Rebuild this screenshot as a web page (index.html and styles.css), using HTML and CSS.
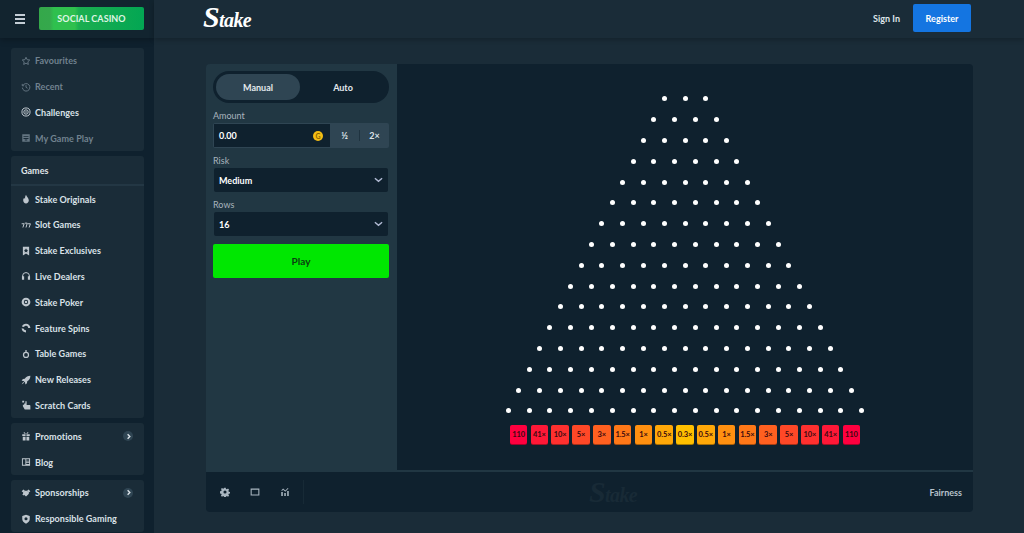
FILE: index.html
```html
<!DOCTYPE html>
<html lang="en">
<head>
    <meta charset="UTF-8">
    <meta name="viewport" content="width=device-width, initial-scale=1.0">
    <title>Plinko - Stake</title>
    <link rel="stylesheet" href="styles.css">
</head>
<body>

<div class="app">

    <!-- Sidebar -->
    <aside class="sidebar">
        <div class="side-top">
            <button class="burger"><span></span><span></span><span></span></button>
            <a class="social-btn" href="#">SOCIAL CASINO</a>
        </div>

        <nav class="side-nav">
            <div class="side-card">
                <a class="side-item muted" href="#">
                    <svg class="side-icon" viewBox="0 0 16 16"><path class="line" d="M8 2l1.8 3.900 4.200.5-3.100 2.900.8 4.200L8 11.400l-3.700 2.100.8-4.200L2 6.400l4.200-.5z"/></svg>
                    Favourites
                </a>
                <a class="side-item muted" href="#">
                    <svg class="side-icon" viewBox="0 0 16 16"><path class="line" d="M3 5.500A6 6 0 1 1 2.200 9M2 3v3h3M8 5v3.500l2.500 1.500"/></svg>
                    Recent
                </a>
                <a class="side-item" href="#">
                    <svg class="side-icon" viewBox="0 0 16 16"><circle class="line" cx="8" cy="8" r="6.500"/><circle class="line" cx="8" cy="8" r="3.500"/><circle cx="8" cy="8" r="1.300"/></svg>
                    Challenges
                </a>
                <a class="side-item muted" href="#">
                    <svg class="side-icon" viewBox="0 0 16 16"><path d="M2 2h12v12H2zM4 5v1.500h8V5zm0 3v1.500h8V8zm2 2.500V12h4v-1.500z" fill-rule="evenodd"/></svg>
                    My Game Play
                </a>
            </div>

            <div class="side-card">
                <div class="side-head">Games</div>
                <a class="side-item" href="#">
                    <svg class="side-icon" viewBox="0 0 16 16"><path d="M8 1c.5 2.500 4.500 5 4.500 9 0 2.800-2 5-4.500 5s-4.500-2.200-4.500-5c0-1.800.8-3 1.800-4 .2 1 .6 1.500 1.200 1.800C6.300 5.500 6.800 3 8 1z"/></svg>
                    Stake Originals
                </a>
                <a class="side-item" href="#">
                    <svg class="side-icon" viewBox="0 0 16 16"><path class="line" d="M1 6h4L3 12M6 5h4L8 12M11 6h4L13 12"/></svg>
                    Slot Games
                </a>
                <a class="side-item" href="#">
                    <svg class="side-icon" viewBox="0 0 16 16"><path fill-rule="evenodd" d="M3 1h10v14l-5-3-5 3zm5 2.500L6.800 6 4.500 6.300l1.700 1.600-.4 2.300L8 9l2.200 1.200-.4-2.300 1.700-1.600L9.200 6z"/></svg>
                    Stake Exclusives
                </a>
                <a class="side-item" href="#">
                    <svg class="side-icon" viewBox="0 0 16 16"><path class="line" d="M2.500 11V8a5.500 5.500 0 0 1 11 0v3"/><path d="M1.500 8.500h3.500V14H1.500zM11 8.500h3.500V14H11z"/></svg>
                    Live Dealers
                </a>
                <a class="side-item" href="#">
                    <svg class="side-icon" viewBox="0 0 16 16"><path fill-rule="evenodd" d="M8 1a7 7 0 1 1 0 14A7 7 0 0 1 8 1zm0 3.500a3.500 3.500 0 1 0 0 7 3.500 3.500 0 0 0 0-7z"/><circle cx="8" cy="8" r="2"/></svg>
                    Stake Poker
                </a>
                <a class="side-item" href="#">
                    <svg class="side-icon" viewBox="0 0 16 16"><path d="M8 1a7 7 0 0 1 7 7h-3.500A3.500 3.500 0 0 0 4.800 6.500L1.500 5.500A7 7 0 0 1 8 1zM1 8.500l3.500.5A3.500 3.500 0 0 0 8 11.500V15a7 7 0 0 1-7-6.500z"/></svg>
                    Feature Spins
                </a>
                <a class="side-item" href="#">
                    <svg class="side-icon" viewBox="0 0 16 16"><path fill-rule="evenodd" d="M8 4.500a5 5 0 1 1 0 10 5 5 0 0 1 0-10zm0 2a3 3 0 1 0 0 6 3 3 0 0 0 0-6z"/><path d="M7 1.500h2V5H7z"/></svg>
                    Table Games
                </a>
                <a class="side-item" href="#">
                    <svg class="side-icon" viewBox="0 0 16 16"><path d="M15 1c-4 0-7 1.500-9 5L3 6.500 1 9l3 .5 2.500 2.500.5 3 2.500-2 .5-3c3.500-2 5-5 5-9zM3.500 11L1 15l4-2.500z"/></svg>
                    New Releases
                </a>
                <a class="side-item" href="#">
                    <svg class="side-icon" viewBox="0 0 16 16"><path d="M2 1h3v3H2zM5 5.500h2V2h2v6h4.500c.8 0 1.500.7 1.500 1.500V15H6L3 10V7.500h2z"/></svg>
                    Scratch Cards
                </a>
            </div>

            <div class="side-card">
                <a class="side-item" href="#">
                    <svg class="side-icon" viewBox="0 0 16 16"><path d="M2 5h5.300v3H2zM8.700 5H14v3H8.700zM2.800 9h4.500v6H2.800zM8.700 9h4.500v6H8.700zM5 1.500l3 3 3-3 1 1.500-2 1.500H6L4 3z"/></svg>
                    Promotions
                    <span class="side-arrow"><svg viewBox="0 0 8 8"><path class="line" d="M3 1.500L5.500 4 3 6.500"/></svg></span>
                </a>
                <a class="side-item" href="#">
                    <svg class="side-icon" viewBox="0 0 16 16"><path fill-rule="evenodd" d="M1.500 2h13v12h-13zM3 3.500V12.500h4V3.500zm5.500 0V6H13V3.500zm0 3.500v1.500H13V7zm0 2.500V11H13V9.500z"/></svg>
                    Blog
                </a>
            </div>

            <div class="side-card">
                <a class="side-item" href="#">
                    <svg class="side-icon" viewBox="0 0 16 16"><path d="M1 5l3-2.500 2 1.500-2.500 3zM15 5l-3-2.500-2 1.500 2.500 3zM6 4.500h4l3 3.500-1.500 2.500-3.500 3-4-3.500L3 8zM2 10l1.500-1L5 11l-1 1z"/></svg>
                    Sponsorships
                    <span class="side-arrow"><svg viewBox="0 0 8 8"><path class="line" d="M3 1.500L5.500 4 3 6.500"/></svg></span>
                </a>
                <a class="side-item" href="#">
                    <svg class="side-icon" viewBox="0 0 16 16"><path fill-rule="evenodd" d="M8 1l6 2v5c0 3.500-2.500 6-6 7.500C4.500 14 2 11.500 2 8V3zm0 4a2.500 2.500 0 1 0 0 5 2.500 2.500 0 0 0 0-5z"/></svg>
                    Responsible Gaming
                </a>
            </div>
        </nav>
    </aside>

    <div class="main">

        <!-- Top bar -->
        <header class="topbar">
            <a class="logo" href="#"><span class="logo-s">S</span>take</a>
            <div class="auth">
                <a class="signin" href="#">Sign In</a>
                <a class="register" href="#">Register</a>
            </div>
        </header>

        <!-- Game -->
        <section class="game">
            <div class="game-body">
                <div class="controls">
                    <div class="mode">
                        <span class="mode-btn active">Manual</span>
                        <span class="mode-btn">Auto</span>
                    </div>

                    <label class="field-label">Amount</label>
                    <div class="amount">
                        <div class="amount-input">
                            0.00
                            <span class="coin">G</span>
                        </div>
                        <div class="amount-btns">
                            <span>½</span>
                            <span>2×</span>
                        </div>
                    </div>

                    <label class="field-label">Risk</label>
                    <div class="select">
                        Medium
                        <svg class="chevron" viewBox="0 0 10 6"><path class="line" d="M1 1l4 3.500L9 1"/></svg>
                    </div>

                    <label class="field-label">Rows</label>
                    <div class="select">
                        16
                        <svg class="chevron" viewBox="0 0 10 6"><path class="line" d="M1 1l4 3.500L9 1"/></svg>
                    </div>

                    <button class="play">Play</button>
                </div>

                <div class="board">
                    <div class="peg-row"><i></i><i></i><i></i></div>
                    <div class="peg-row"><i></i><i></i><i></i><i></i></div>
                    <div class="peg-row"><i></i><i></i><i></i><i></i><i></i></div>
                    <div class="peg-row"><i></i><i></i><i></i><i></i><i></i><i></i></div>
                    <div class="peg-row"><i></i><i></i><i></i><i></i><i></i><i></i><i></i></div>
                    <div class="peg-row"><i></i><i></i><i></i><i></i><i></i><i></i><i></i><i></i></div>
                    <div class="peg-row"><i></i><i></i><i></i><i></i><i></i><i></i><i></i><i></i><i></i></div>
                    <div class="peg-row"><i></i><i></i><i></i><i></i><i></i><i></i><i></i><i></i><i></i><i></i></div>
                    <div class="peg-row"><i></i><i></i><i></i><i></i><i></i><i></i><i></i><i></i><i></i><i></i><i></i></div>
                    <div class="peg-row"><i></i><i></i><i></i><i></i><i></i><i></i><i></i><i></i><i></i><i></i><i></i><i></i></div>
                    <div class="peg-row"><i></i><i></i><i></i><i></i><i></i><i></i><i></i><i></i><i></i><i></i><i></i><i></i><i></i></div>
                    <div class="peg-row"><i></i><i></i><i></i><i></i><i></i><i></i><i></i><i></i><i></i><i></i><i></i><i></i><i></i><i></i></div>
                    <div class="peg-row"><i></i><i></i><i></i><i></i><i></i><i></i><i></i><i></i><i></i><i></i><i></i><i></i><i></i><i></i><i></i></div>
                    <div class="peg-row"><i></i><i></i><i></i><i></i><i></i><i></i><i></i><i></i><i></i><i></i><i></i><i></i><i></i><i></i><i></i><i></i></div>
                    <div class="peg-row"><i></i><i></i><i></i><i></i><i></i><i></i><i></i><i></i><i></i><i></i><i></i><i></i><i></i><i></i><i></i><i></i><i></i></div>
                    <div class="peg-row"><i></i><i></i><i></i><i></i><i></i><i></i><i></i><i></i><i></i><i></i><i></i><i></i><i></i><i></i><i></i><i></i><i></i><i></i></div>

                    <div class="multipliers">
                        <span class="m0">110</span>
                        <span class="m1">41×</span>
                        <span class="m2">10×</span>
                        <span class="m3">5×</span>
                        <span class="m4">3×</span>
                        <span class="m5">1.5×</span>
                        <span class="m6">1×</span>
                        <span class="m7">0.5×</span>
                        <span class="m8">0.3×</span>
                        <span class="m7">0.5×</span>
                        <span class="m6">1×</span>
                        <span class="m5">1.5×</span>
                        <span class="m4">3×</span>
                        <span class="m3">5×</span>
                        <span class="m2">10×</span>
                        <span class="m1">41×</span>
                        <span class="m0">110</span>
                    </div>
                </div>
            </div>

            <div class="game-foot">
                <div class="foot-icons">
                    <svg viewBox="0 0 16 16"><path fill-rule="evenodd" d="M6.800 1h2.400l.4 2 1.500.6 1.700-1.100 1.700 1.700-1.100 1.700.6 1.500 2 .4v2.400l-2 .4-.6 1.500 1.100 1.700-1.700 1.700-1.700-1.100-1.500.6-.4 2H6.800l-.4-2-1.500-.6-1.700 1.100-1.700-1.700 1.100-1.700-.6-1.500-2-.4V6.800l2-.4.6-1.500-1.100-1.700 1.700-1.700 1.700 1.100 1.500-.6zM8 5.500a2.500 2.500 0 1 0 0 5 2.500 2.500 0 0 0 0-5z"/></svg>
                    <svg viewBox="0 0 16 16"><path fill-rule="evenodd" d="M1 2.500h14v11H1zm1.700 1.700v7.600h10.600V4.200z"/></svg>
                    <svg viewBox="0 0 16 16"><path d="M2 8h2.500v6.500H2zM6.800 9.500h2.500v5H6.800zM11.500 6.500H14v8h-2.500zM2 5.500l3-3 3.500 3 4-4 1 1-5 5-3.500-3-1.800 2z"/></svg>
                </div>
                <span class="foot-logo"><span class="foot-logo-s">S</span>take</span>
                <a class="fairness" href="#">Fairness</a>
            </div>
        </section>
    </div>
</div>

</body>
</html>
```
FILE: styles.css
```css
html, body {
    height: 100%;
    margin: 0;
}

body {
    background-color: #1a2c38;
    color: #fff;
    font-family: "Lato", "Liberation Sans", sans-serif;
    font-weight: 700;
    overflow: hidden;
}

a {
    color: inherit;
    text-decoration: none;
}

svg .line {
    fill: none;
    stroke: currentColor;
    stroke-width: 1.6;
}

.app {
    display: flex;
    height: 100%;
}

/* Sidebar */
.sidebar {
    flex: 0 0 154px;
    background-color: #0f212e;
    overflow: hidden;
}

.side-top {
    display: flex;
    align-items: center;
    height: 38px;
    padding: 0 0 1px 15px;
    box-sizing: border-box;
    gap: 14px;
    background-color: #12242f;
    box-shadow: 0 2px 6px rgba(0, 0, 0, 0.25);
}

.burger {
    display: flex;
    flex-direction: column;
    gap: 2px;
    width: 10px;
    padding: 0;
    background: none;
    border: none;
}

.burger span {
    display: block;
    height: 2px;
    background-color: #c4ced6;
}

.social-btn {
    display: flex;
    align-items: center;
    justify-content: center;
    width: 105px;
    height: 23px;
    border-radius: 2px;
    background: linear-gradient(90deg, #34a84a 0%, #35a84c 10%, #2fc04e 14%, #2fc04e 34%, #1bae50 38%, #03a653 100%);
    color: #dff5e3;
    font-size: 9px;
    letter-spacing: 0.05px;
}

.side-nav {
    display: flex;
    flex-direction: column;
    gap: 5px;
    padding: 10px 10px 0 11px;
}

.side-card {
    background-color: #1a2c38;
    border-radius: 3px;
}

.side-head {
    display: flex;
    align-items: center;
    height: 28px;
    padding-left: 10px;
    border-bottom: 2px solid #233744;
    font-size: 9px;
    color: #e0e6ea;
}

.side-item {
    display: flex;
    align-items: center;
    height: 25.8px;
    padding-left: 10px;
    gap: 4px;
    font-size: 9px;
    letter-spacing: 0.05px;
    color: #dbe2e8;
}

.side-item.muted {
    color: #71828f;
}

.side-icon {
    width: 10px;
    height: 10px;
    fill: currentColor;
    opacity: 0.85;
}

.side-arrow {
    display: flex;
    align-items: center;
    justify-content: center;
    width: 10px;
    height: 10px;
    margin-left: auto;
    margin-right: 11px;
    border-radius: 50%;
    background-color: #2f4553;
}

.side-arrow svg {
    width: 7px;
    height: 7px;
}

/* Main column */
.main {
    flex: 1;
    display: flex;
    flex-direction: column;
    min-width: 0;
}

.topbar {
    display: flex;
    align-items: center;
    justify-content: space-between;
    height: 38px;
    padding: 0 53px 2px 49px;
    box-sizing: border-box;
    background-color: #1a2c38;
    box-shadow: 0 2px 5px rgba(0, 0, 0, 0.22);
}

.logo {
    font-family: "Liberation Serif", serif;
    font-style: italic;
    font-weight: 700;
    font-size: 20px;
    line-height: 24px;
    letter-spacing: -0.6px;
    color: #fff;
}

.logo-s {
    font-size: 30px;
}

.auth {
    display: flex;
    align-items: center;
    gap: 13px;
}

.signin {
    font-size: 9px;
    color: #dfe5ea;
}

.register {
    display: flex;
    align-items: center;
    justify-content: center;
    width: 58px;
    height: 28px;
    border-radius: 2px;
    background-color: #1475e1;
    font-size: 9px;
}

/* Game */
.game {
    display: flex;
    flex-direction: column;
    width: 767px;
    height: 448px;
    margin: 26px 0 0 52px;
    border-radius: 4px;
    overflow: hidden;
}

.game-body {
    flex: 1;
    display: flex;
    min-height: 0;
}

.controls {
    display: flex;
    flex-direction: column;
    width: 191px;
    padding: 7px 8px 0 7px;
    box-sizing: border-box;
    background-color: #213743;
}

.mode {
    display: flex;
    height: 32px;
    padding: 3px;
    box-sizing: border-box;
    border-radius: 16px;
    background-color: #0f212e;
}

.mode-btn {
    display: flex;
    flex: 1;
    align-items: center;
    justify-content: center;
    border-radius: 13px;
    font-size: 9px;
    color: #e4e9ed;
}

.mode-btn.active {
    flex: 0 0 84px;
    background-color: #2f4553;
}

.field-label {
    display: block;
    margin-top: 7px;
    height: 13px;
    line-height: 11px;
    font-size: 9px;
    font-weight: 400;
    color: #a8b4be;
}

.amount {
    display: flex;
    height: 25px;
    border-radius: 2px;
    overflow: hidden;
    background-color: #2f4553;
}

.amount-input {
    display: flex;
    align-items: center;
    justify-content: space-between;
    width: 116px;
    margin: 1px 0 1px 1px;
    padding: 0 7px 0 5px;
    box-sizing: border-box;
    background-color: #0f212e;
    font-size: 9px;
}

.coin {
    display: flex;
    align-items: center;
    justify-content: center;
    width: 10px;
    height: 10px;
    border-radius: 50%;
    background-color: #f5bd14;
    color: #8a6400;
    font-size: 7px;
}

.amount-btns {
    flex: 1;
    display: flex;
    align-items: center;
}

.amount-btns span {
    flex: 1;
    text-align: center;
    font-size: 9px;
    color: #dde3e8;
}

.amount-btns span:first-child {
    border-right: 1px solid #1f3340;
}

.select {
    display: flex;
    align-items: center;
    justify-content: space-between;
    height: 24px;
    margin: 0 1px;
    padding: 0 5px;
    box-sizing: border-box;
    border-radius: 2px;
    background-color: #0f212e;
    font-size: 9px;
}

.chevron {
    width: 9px;
    height: 6px;
    color: #b1bad3;
}

.play {
    height: 34px;
    margin-top: 8px;
    border: none;
    border-radius: 2px;
    background-color: #00e701;
    color: #0a3d10;
    font-family: inherit;
    font-size: 10px;
    font-weight: 700;
}

/* Plinko board */
.board {
    flex: 1;
    display: flex;
    flex-direction: column;
    padding-top: 24.6px;
    background-color: #0f212e;
}

.peg-row {
    display: flex;
    align-items: center;
    justify-content: center;
    flex: 0 0 20.8px;
    gap: 15.8px;
}

.peg-row i {
    width: 5px;
    height: 5px;
    border-radius: 50%;
    background-color: #fff;
}

.multipliers {
    display: flex;
    justify-content: center;
    gap: 3.3px;
    margin-top: 3.6px;
}

.multipliers span {
    display: flex;
    align-items: center;
    justify-content: center;
    width: 17.5px;
    height: 19px;
    border-radius: 2px;
    color: #3a0a10;
    font-size: 7.5px;
    letter-spacing: -0.1px;
}

.m0 { background-color: #ff003f; box-shadow: 0 1px 0 #a60029; }
.m1 { background-color: #ff1837; box-shadow: 0 1px 0 #a60f24; }
.m2 { background-color: #ff302f; box-shadow: 0 1px 0 #a61f1f; }
.m3 { background-color: #ff4827; box-shadow: 0 1px 0 #a62f19; }
.m4 { background-color: #ff6020; box-shadow: 0 1px 0 #a63e15; }
.m5 { background-color: #ff7818; box-shadow: 0 1px 0 #a64e10; }
.m6 { background-color: #ff9010; box-shadow: 0 1px 0 #a65e0a; }
.m7 { background-color: #ffa808; box-shadow: 0 1px 0 #a66d05; }
.m8 { background-color: #ffc000; box-shadow: 0 1px 0 #a67c00; }

.game-foot {
    display: flex;
    align-items: center;
    height: 42px;
    padding: 0 11px 0 14px;
    border-top: 2px solid #213743;
    box-sizing: border-box;
    background-color: #0f212e;
}

.foot-icons {
    display: flex;
    align-items: center;
    gap: 20px;
    height: 24px;
    padding-right: 13px;
    border-right: 1px solid #172a36;
    color: #a9b6c0;
}

.foot-icons svg {
    width: 10px;
    height: 10px;
    fill: currentColor;
}

.foot-logo {
    margin-left: 285px;
    font-family: "Liberation Serif", serif;
    font-style: italic;
    font-weight: 700;
    font-size: 20px;
    letter-spacing: -0.6px;
    color: #182a36;
}

.foot-logo-s {
    font-size: 30px;
}

.fairness {
    margin-left: auto;
    font-size: 9px;
    color: #b7c2cb;
}
```
